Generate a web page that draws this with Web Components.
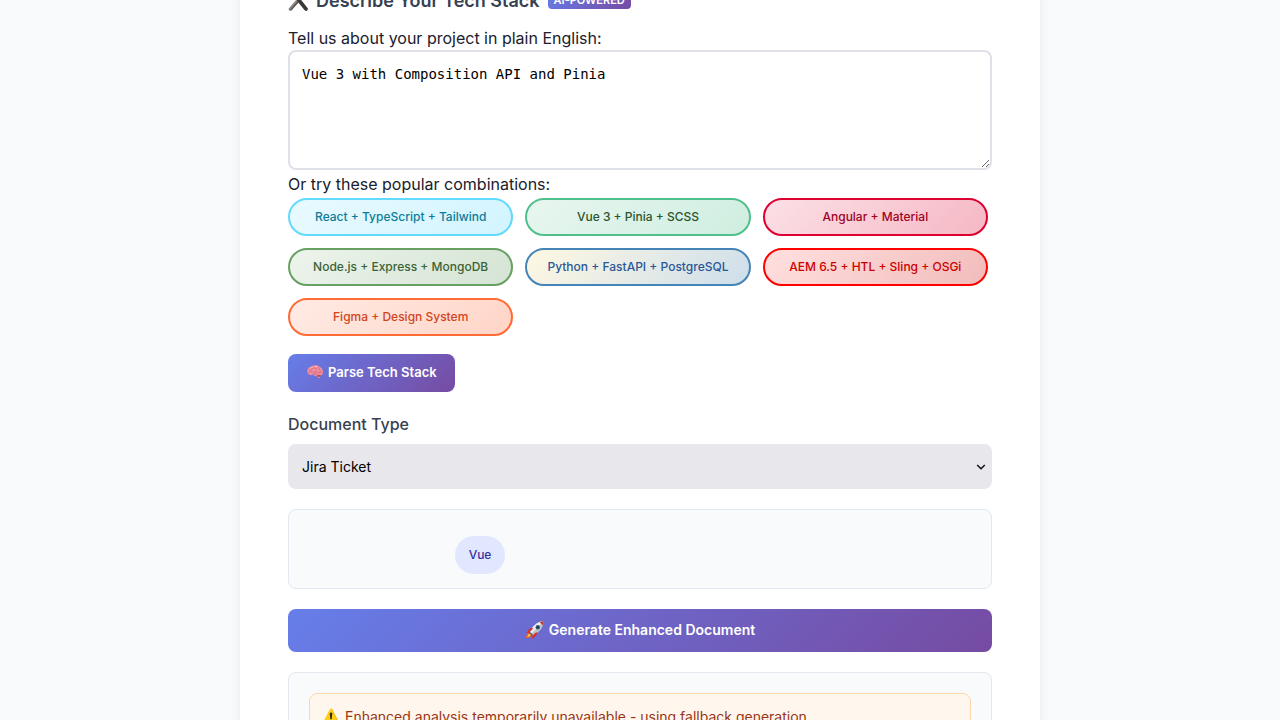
<!DOCTYPE html>
<html lang="en">
<head>
<meta charset="utf-8">
<meta name="viewport" content="width=device-width, initial-scale=1">
<title>Tech Stack Document Generator</title>
<style>
  body { margin: 0; background: #f8fafc; color: #1a202c; font: 16px/24px Inter, "Liberation Sans", sans-serif; }
</style>
</head>
<body>
<doc-generator></doc-generator>

<script>
const ICONS = {
  tools: `<svg viewBox="0 0 20 20" width="20" height="20"><path d="M16.5 2 8 12.5" stroke="#9aa0a6" stroke-width="2.6"/><path d="M9.5 10 2.4 18.2" stroke="#8d8681" stroke-width="3.4" stroke-linecap="round"/><path d="M10 10.8 3.2 18.6" stroke="#5b524d" stroke-width="1.4" stroke-linecap="round"/><path d="M2.3 2.2 7 1.3l2 3.4-3 2.6z" fill="#6d7278"/><path d="M6 4 11.6 10.4" stroke="#8a8d92" stroke-width="2.6"/><path d="M11.2 9.6 17.9 17.9" stroke="#3b3838" stroke-width="3.8" stroke-linecap="round"/></svg>`,
  brain: `<svg viewBox="0 0 18 18" width="18" height="18"><path d="M1.4 9.6C.8 6.6 2.5 4 5.3 3.2 8 1.8 12 1.8 14 3.9c2.1.8 3.3 3.4 2.9 5.7.2 1.9-1.2 2.8-2.6 2.9l-.4 2.2-1.7.4-1.1-2.3c-2.2.3-3.5-.2-4.4-1-2.5.9-4.9-.1-5.3-2.2z" fill="#ef8f9f"/><path d="M3.3 7.3c1.3-1.8 2.7-.8 3.6-2.1M7.4 4.3c1.5.4 1.4 2.1 3.1 1.8M12.2 4.1c-.3 1.6 1.7 1.4 2 3M3.1 9.7c1.5-.6 1.6-1.8 3.3-1.6M7.2 10c1-1.8 2.7-.5 4-1.8M12.2 9.6c1.3.2 1.8-.6 3.2-.5M6.9 11.1c1.5-.7 3.1.3 4.4-.1" fill="none" stroke="#c95b73" stroke-width=".8" stroke-linecap="round"/><path d="M4.4 5.4c1-.8 1.9-1.2 3-1.3M9 3.4c1.1-.1 2 .1 2.8.4" fill="none" stroke="#ffc0c7" stroke-width=".8" stroke-linecap="round"/><path d="M11 12.5c1.1-.9 3-.7 3.7-.3l-.6 1.7c-1.2.4-2.3-.1-3.1-1.4z" fill="#b94d5e"/></svg>`,
  rocket: `<svg viewBox="0 0 20 20" width="20" height="20"><path d="M6.4 10.5c-2-.4-4.1.4-5.2 2.4l3.4-.1zM9.5 13.8c.5 1.9-.3 4.1-2.2 5.2l-.1-3.4z" fill="#e52a20"/><path d="M4.4 12.7c-2.4.7-3.3 3.5-3.5 5.4 2 0 4.8-.8 5.9-3.1z" fill="#ff6319"/><path d="M4.7 13.7c-1.5.8-2 2-2.2 3.1 1.3-.1 2.7-.8 3.4-2z" fill="#ffe047"/><path d="M5.2 12.1C6.9 6.5 12.2 1.7 18.7 1.3c-.2 6.6-5.1 12-10.8 13.6z" fill="#bcc4ca"/><path d="M5.2 12.1C6.9 6.5 12.2 1.7 18.7 1.3L6.5 13.5z" fill="#e6ecef"/><path d="M14.8 2.3c1.2-.5 2.5-.9 3.9-1-.1 1.4-.4 2.8-.9 4z" fill="#bd3531"/><path d="M8 8.2C5.6 7.8 3.8 9 2.9 10.9l3.3-.1zM11.8 12c.5 2.3-.5 4.1-2.5 5.2l-.2-3.4z" fill="#e42c22"/><circle cx="12.8" cy="7.2" r="2.2" fill="#50606b"/><circle cx="12.8" cy="7.2" r="1.3" fill="#173b59"/><path d="m4.8 12 3.2 3.2-1.2.5-2.5-2.5z" fill="#555"/></svg>`,
  warning: `<svg viewBox="0 0 18 18" width="18" height="18"><path d="M7.9 1.3q1.1-1.7 2.2 0l7.2 13.6q.7 1.6-1 1.7H1.7q-1.7-.1-1-1.7z" fill="#ffcf17"/><path d="M9 .4q.6.1 1.1.9l7.2 13.6q.6 1.4-.6 1.7z" fill="#f5b914"/><path d="M7.7 5q1.3-1 2.6 0l-.6 6q-.7.8-1.4 0z" fill="#30281b"/><circle cx="9" cy="13.6" r="1.2" fill="#30281b"/></svg>`
};

function define(name, html, setup) {
  const template = document.createElement("template");
  template.innerHTML = `<style>*{box-sizing:border-box}:host([hidden]){display:none}</style>${html}`;
  customElements.define(name, class extends HTMLElement {
    constructor() {
      super();
      this.attachShadow({ mode: "open" }).append(template.content.cloneNode(true));
    }
    connectedCallback() {
      if (setup) setup(this, this.shadowRoot);
    }
  });
}

define("ui-icon", `
  <style>:host { display: inline-flex; flex: none; } span { display: flex; }</style>
  <span aria-hidden="true"></span>`,
  (el, root) => { root.querySelector("span").innerHTML = ICONS[el.getAttribute("name")]; });

define("section-title", `
  <style>
    :host { display: block; }
    h2 { display: flex; align-items: center; gap: 8px; margin: 0; font-size: 18px; line-height: 28px; font-weight: 600; color: #374151; }
    .badge { margin-bottom: 2px; padding: 1px 6px; border-radius: 4px; background: linear-gradient(135deg, #667eea, #764ba2); color: #fff; font-size: 11px; line-height: 16px; }
  </style>
  <h2><ui-icon name="tools"></ui-icon><slot></slot><span class="badge"><slot name="badge"></slot></span></h2>`);

define("stack-input", `
  <style>
    :host { display: block; }
    label { display: block; font-variation-settings: "opsz" 24; }
    textarea { display: block; width: 100%; height: 120px; padding: 12px; border: 2px solid #dfe1e8; border-radius: 8px; background: #fff; color: #000; font: 14px/20px "DejaVu Sans Mono", monospace; resize: vertical; outline: none; }
  </style>
  <label for="stack"><slot></slot></label>
  <textarea id="stack"></textarea>`,
  (el, root) => { root.querySelector("textarea").value = el.getAttribute("value"); });

define("combo-chip", `
  <style>
    :host { display: block; --edge: #61dafb; --from: #e9faff; --to: #d2f4ff; --ink: #0c7c99; }
    :host([tone=vue]) { --edge: #4fc08d; --from: #e8f6f0; --to: #cfeee0; --ink: #2c5530; }
    :host([tone=angular]) { --edge: #dd0031; --from: #fce0e6; --to: #f5b8c4; --ink: #a0001f; }
    :host([tone=node]) { --edge: #68a063; --from: #edf4ec; --to: #d4e4d3; --ink: #3c6338; }
    :host([tone=python]) { --edge: #4584b6; --from: #fff8e2; --to: #cddeeb; --ink: #2b5797; }
    :host([tone=aem]) { --edge: #ff0000; --from: #ffe0df; --to: #f1bcbb; --ink: #cc0000; }
    :host([tone=figma]) { --edge: #ff6b35; --from: #ffebe4; --to: #ffd5c7; --ink: #d1451c; }
    button { display: block; width: 100%; height: 38px; padding: 0 12px; border: 2px solid var(--edge); border-radius: 20px; background: linear-gradient(135deg, var(--from), var(--to)); color: var(--ink); font: 500 12px/16px Inter, sans-serif; white-space: nowrap; cursor: pointer; }
  </style>
  <button type="button"><slot></slot></button>`);

define("combo-list", `
  <style>
    :host { display: block; }
    div { display: grid; grid-template-columns: repeat(auto-fill, minmax(200px, 1fr)); gap: 12px; max-width: 700px; }
    p { margin: 0 0 2px; font-variation-settings: "opsz" 24; }
  </style>
  <p><slot name="label"></slot></p>
  <div><slot></slot></div>`);

define("action-button", `
  <style>
    :host { display: block; }
    button { display: inline-flex; align-items: center; justify-content: center; gap: 4px; height: 38px; padding: 0 18px 2px; border: 0; border-radius: 8px; background: linear-gradient(135deg, #667eea, #764ba2); color: #fff; font: 600 13px/16px Inter, sans-serif; cursor: pointer; }
    :host([block]) button { width: 100%; height: 43px; font-size: 14px; }
  </style>
  <button type="button"><slot name="icon"></slot><slot></slot></button>`);

define("type-select", `
  <style>
    :host { display: block; }
    label { display: block; margin-bottom: 8px; font-weight: 500; color: #374151; font-variation-settings: "opsz" 24; }
    div { position: relative; }
    select { display: block; appearance: none; width: 100%; height: 45px; padding: 0 30px 0 14px; border: 0; border-radius: 8px; background: #e8e7ec; color: #000; font: 14px/20px Inter, sans-serif; }
    svg { position: absolute; right: 6px; top: 18px; pointer-events: none; }
  </style>
  <label for="type"><slot></slot></label>
  <div>
    <select id="type"><option>Jira Ticket</option></select>
    <svg width="10" height="10" viewBox="0 0 10 10" aria-hidden="true"><path d="M1.2 3 5 6.8 8.8 3" fill="none" stroke="#111" stroke-width="1.5"/></svg>
  </div>`);

define("info-panel", `
  <style>
    :host { display: block; box-sizing: border-box; padding: 20px; border: 1px solid #e2e8f0; border-radius: 8px; background: #f8fafc; }
  </style>
  <slot></slot>`);

define("tag-row", `
  <style>
    :host { display: flex; flex-wrap: wrap; gap: 8px; padding: 6px 0 0 22%; margin-bottom: -6px; }
  </style>
  <slot></slot>`);

define("stack-tag", `
  <style>
    :host { display: block; padding: 10px 14px; border-radius: 20px; background: #e0e7ff; color: #3730a3; font-size: 12px; line-height: 18px; font-weight: 500; }
  </style>
  <slot></slot>`);

define("alert-note", `
  <style>
    :host { display: flex; align-items: center; gap: 5px; padding: 12px; border: 1px solid #fed7aa; border-radius: 8px; background: #fff7ed; color: #9a3412; font-size: 14px; line-height: 22px; font-variation-settings: "opsz" 22; }
  </style>
  <ui-icon name="warning"></ui-icon><slot></slot>`);

define("doc-generator", `
  <style>
    :host { display: block; height: 100vh; overflow: hidden; }
    main { max-width: 800px; min-height: 100vh; margin: 0 auto; padding: 0 48px 48px; background: #fff; box-shadow: 0 4px 10px rgba(0, 0, 0, .08); }
    section-title { margin-top: -13px; padding-bottom: 11px; }
    combo-list { margin-top: 2px; }
    action-button { margin-top: 18px; }
    type-select { margin: 20px 0; }
    action-button[block] { margin: 20px 0; }
  </style>
  <main>
    <section-title>Describe Your Tech Stack<span slot="badge">AI-POWERED</span></section-title>
    <stack-input value="Vue 3 with Composition API and Pinia">Tell us about your project in plain English:</stack-input>
    <combo-list>
      <span slot="label">Or try these popular combinations:</span>
      <combo-chip tone="react">React + TypeScript + Tailwind</combo-chip>
      <combo-chip tone="vue">Vue 3 + Pinia + SCSS</combo-chip>
      <combo-chip tone="angular">Angular + Material</combo-chip>
      <combo-chip tone="node">Node.js + Express + MongoDB</combo-chip>
      <combo-chip tone="python">Python + FastAPI + PostgreSQL</combo-chip>
      <combo-chip tone="aem">AEM 6.5 + HTL + Sling + OSGi</combo-chip>
      <combo-chip tone="figma">Figma + Design System</combo-chip>
    </combo-list>
    <action-button><ui-icon slot="icon" name="brain"></ui-icon>Parse Tech Stack</action-button>
    <type-select>Document Type</type-select>
    <info-panel><tag-row><stack-tag>Vue</stack-tag></tag-row></info-panel>
    <action-button block><ui-icon slot="icon" name="rocket"></ui-icon>Generate Enhanced Document</action-button>
    <info-panel><alert-note>Enhanced analysis temporarily unavailable - using fallback generation</alert-note></info-panel>
  </main>`);
</script>
</body>
</html>
